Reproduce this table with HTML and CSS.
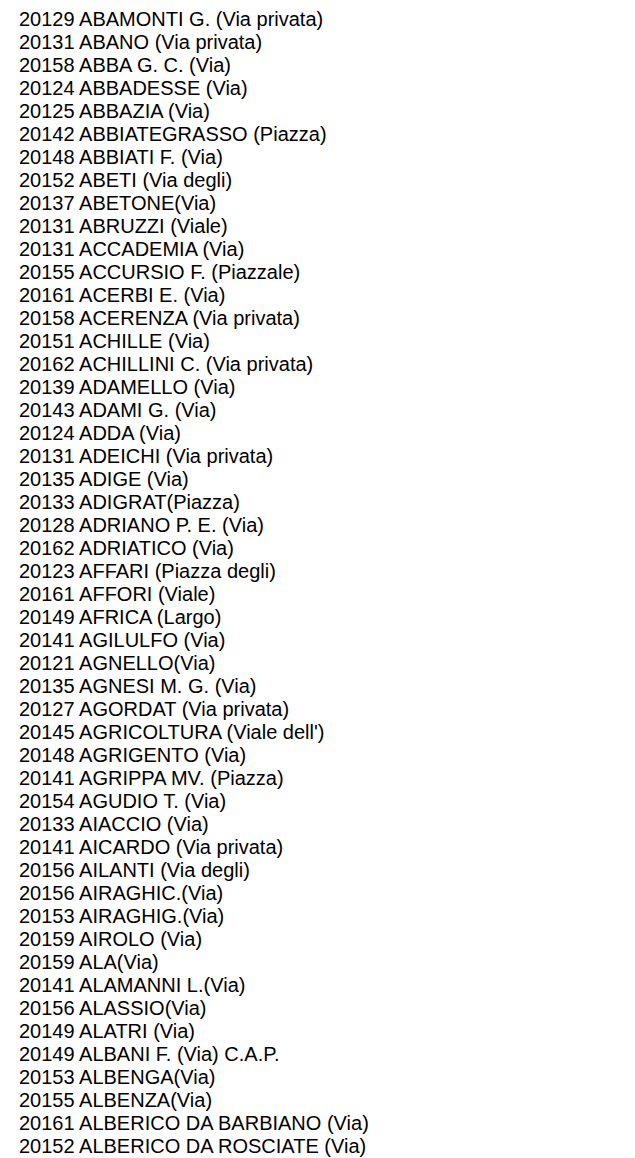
FILE: index.html
```html
<!DOCTYPE html>
<html lang="it">
<head>
<meta charset="utf-8">
<title>Vie</title>
<link rel="stylesheet" href="styles.css">
</head>
<body>
<ul class="streets">
<li>20129 ABAMONTI G. (Via privata)</li>
<li>20131 ABANO (Via privata)</li>
<li>20158 ABBA G. C. (Via)</li>
<li>20124 ABBADESSE (Via)</li>
<li>20125 ABBAZIA (Via)</li>
<li>20142 ABBIATEGRASSO (Piazza)</li>
<li>20148 ABBIATI F. (Via)</li>
<li>20152 ABETI (Via degli)</li>
<li>20137 ABETONE(Via)</li>
<li>20131 ABRUZZI (Viale)</li>
<li>20131 ACCADEMIA (Via)</li>
<li>20155 ACCURSIO F. (Piazzale)</li>
<li>20161 ACERBI E. (Via)</li>
<li>20158 ACERENZA (Via privata)</li>
<li>20151 ACHILLE (Via)</li>
<li>20162 ACHILLINI C. (Via privata)</li>
<li>20139 ADAMELLO (Via)</li>
<li>20143 ADAMI G. (Via)</li>
<li>20124 ADDA (Via)</li>
<li>20131 ADEICHI (Via privata)</li>
<li>20135 ADIGE (Via)</li>
<li>20133 ADIGRAT(Piazza)</li>
<li>20128 ADRIANO P. E. (Via)</li>
<li>20162 ADRIATICO (Via)</li>
<li>20123 AFFARI (Piazza degli)</li>
<li>20161 AFFORI (Viale)</li>
<li>20149 AFRICA (Largo)</li>
<li>20141 AGILULFO (Via)</li>
<li>20121 AGNELLO(Via)</li>
<li>20135 AGNESI M. G. (Via)</li>
<li>20127 AGORDAT (Via privata)</li>
<li>20145 AGRICOLTURA (Viale dell')</li>
<li>20148 AGRIGENTO (Via)</li>
<li>20141 AGRIPPA MV. (Piazza)</li>
<li>20154 AGUDIO T. (Via)</li>
<li>20133 AIACCIO (Via)</li>
<li>20141 AICARDO (Via privata)</li>
<li>20156 AILANTI (Via degli)</li>
<li>20156 AIRAGHIC.(Via)</li>
<li>20153 AIRAGHIG.(Via)</li>
<li>20159 AIROLO (Via)</li>
<li>20159 ALA(Via)</li>
<li>20141 ALAMANNI L.(Via)</li>
<li>20156 ALASSIO(Via)</li>
<li>20149 ALATRI (Via)</li>
<li>20149 ALBANI F. (Via) C.A.P.</li>
<li>20153 ALBENGA(Via)</li>
<li>20155 ALBENZA(Via)</li>
<li>20161 ALBERICO DA BARBIANO (Via)</li>
<li>20152 ALBERICO DA ROSCIATE (Via)</li>
</ul>
</body>
</html>
```
FILE: styles.css
```css
html, body {
  background: #ffffff;
}
body {
  margin: 8px;
  font-family: "Liberation Sans", Arial, sans-serif;
  font-size: 20px;
  color: #000000;
}
.streets {
  list-style: none;
  margin: 0;
  padding: 0 0 0 11px;
}
.streets li {
  line-height: 23px;
  white-space: nowrap;
}
```
